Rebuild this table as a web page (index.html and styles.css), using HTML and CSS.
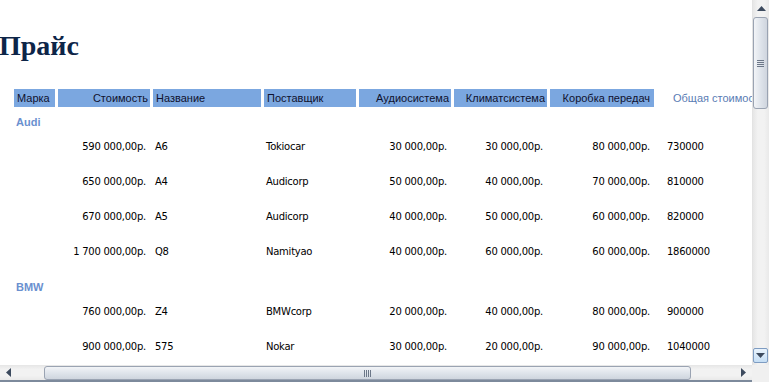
FILE: index.html
```html
<!DOCTYPE html>
<html lang="ru">
<head>
<meta charset="utf-8">
<title>Прайс</title>
<link rel="stylesheet" href="styles.css">
</head>
<body>
<div class="window">
  <div class="content">
    <h1 class="title">Прайс</h1>
    <div class="row head">
      <div class="hc l">Марка</div>
      <div class="hc r">Стоимость</div>
      <div class="hc l">Название</div>
      <div class="hc l">Поставщик</div>
      <div class="hc r">Аудиосистема</div>
      <div class="hc r">Климатсистема</div>
      <div class="hc r hc-last">Коробка передач</div>
      <div class="hc-total">Общая стоимость</div>
    </div>

    <div class="group">
      <div class="glabel">Audi</div>
      <div class="row data"><div></div><div class="r">590 000,00р.</div><div class="l">A6</div><div class="l">Tokiocar</div><div class="r">30 000,00р.</div><div class="r">30 000,00р.</div><div class="r">80 000,00р.</div><div class="t">730000</div></div>
      <div class="row data"><div></div><div class="r">650 000,00р.</div><div class="l">A4</div><div class="l">Audicorp</div><div class="r">50 000,00р.</div><div class="r">40 000,00р.</div><div class="r">70 000,00р.</div><div class="t">810000</div></div>
      <div class="row data"><div></div><div class="r">670 000,00р.</div><div class="l">A5</div><div class="l">Audicorp</div><div class="r">40 000,00р.</div><div class="r">50 000,00р.</div><div class="r">60 000,00р.</div><div class="t">820000</div></div>
      <div class="row data"><div></div><div class="r">1 700 000,00р.</div><div class="l">Q8</div><div class="l">Namityao</div><div class="r">40 000,00р.</div><div class="r">60 000,00р.</div><div class="r">60 000,00р.</div><div class="t">1860000</div></div>
    </div>

    <div class="group">
      <div class="glabel">BMW</div>
      <div class="row data"><div></div><div class="r">760 000,00р.</div><div class="l">Z4</div><div class="l">BMWcorp</div><div class="r">20 000,00р.</div><div class="r">40 000,00р.</div><div class="r">80 000,00р.</div><div class="t">900000</div></div>
      <div class="row data"><div></div><div class="r">900 000,00р.</div><div class="l">575</div><div class="l">Nokar</div><div class="r">30 000,00р.</div><div class="r">20 000,00р.</div><div class="r">90 000,00р.</div><div class="t">1040000</div></div>
    </div>
  </div>

  <div class="vscroll">
    <div class="sbtn">
      <svg width="9" height="5" viewBox="0 0 9 5"><path d="M0 5 L4.5 0 L9 5 Z" fill="#3c4a5e"/></svg>
    </div>
    <div class="vthumb">
      <span class="grip-h"></span><span class="grip-h"></span><span class="grip-h"></span><span class="grip-h"></span>
    </div>
    <div class="vtrack"></div>
    <div class="sbtn sbtn-hot">
      <svg width="9" height="5" viewBox="0 0 9 5"><path d="M0 0 L9 0 L4.5 5 Z" fill="#3c4a5e"/></svg>
    </div>
  </div>

  <div class="hscroll">
    <div class="hbtn">
      <svg width="5" height="9" viewBox="0 0 5 9"><path d="M5 0 L5 9 L0 4.5 Z" fill="#3c4a5e"/></svg>
    </div>
    <div class="htrack-a"></div>
    <div class="hthumb">
      <span class="grip-v"></span><span class="grip-v"></span><span class="grip-v"></span><span class="grip-v"></span>
    </div>
    <div class="htrack-b"></div>
    <div class="hbtn">
      <svg width="5" height="9" viewBox="0 0 5 9"><path d="M0 0 L5 4.5 L0 9 Z" fill="#3c4a5e"/></svg>
    </div>
  </div>

  <div class="corner"></div>
</div>
</body>
</html>
```

FILE: styles.css
```css
html, body {
  margin: 0;
  padding: 0;
  background: #ffffff;
}

.window {
  display: grid;
  grid-template-columns: 752px 17px;
  grid-template-rows: 365px 17px;
  width: 769px;
  height: 382px;
  overflow: hidden;
}

.content {
  overflow: hidden;
  background: #ffffff;
}

.title {
  margin: 0;
  padding: 29px 0 0 0;
  height: 60px;
  line-height: 34px;
  font-family: "Liberation Serif", serif;
  font-weight: bold;
  font-size: 28px;
  color: #0d2548;
  text-indent: -1px;
}

.row {
  display: grid;
  grid-template-columns: 41px 92px 108px 92px 92px 93px 104px 120px;
  column-gap: 3px;
  padding-left: 14px;
}

.head {
  height: 18px;
  font-family: "Liberation Sans", sans-serif;
  font-size: 11px;
  line-height: 18px;
  color: #10122e;
  margin-bottom: 8px;
}

.hc {
  background: #7ba7e0;
  white-space: nowrap;
  overflow: hidden;
}

.hc.l { padding-left: 3px; }
.hc.r { text-align: right; padding-right: 2px; }
.hc.hc-last { padding-right: 4px; }

.hc-total {
  padding-left: 16px;
  color: #5a7cb4;
  white-space: nowrap;
}

.glabel {
  height: 25px;
  line-height: 14px;
  padding-left: 16px;
  font-family: "Liberation Sans", sans-serif;
  font-size: 11px;
  font-weight: bold;
  color: #6a90cf;
}

.data {
  height: 35px;
  line-height: 14px;
  font-family: "DejaVu Sans", sans-serif;
  font-size: 10px;
  letter-spacing: -0.25px;
  color: #000000;
  white-space: nowrap;
}

.data .r { text-align: right; padding-right: 4px; }
.data .l { padding-left: 2px; }
.data .t { padding-left: 10px; }

/* vertical scrollbar */
.vscroll {
  display: flex;
  flex-direction: column;
  background: linear-gradient(to right, #e6e6e6, #f2f2f2 30%, #f2f2f2 70%, #e9e9e9);
  border-left: 1px solid #e3e3e3;
  box-sizing: border-box;
}

.sbtn {
  height: 17px;
  flex: none;
  display: flex;
  align-items: center;
  justify-content: center;
}

.sbtn-hot {
  margin: 0 1px 2px 0;
  height: 15px;
  background: linear-gradient(to bottom, #e9f3fc, #c5def5);
  border: 1px solid #7e9cc2;
  border-radius: 2px;
  box-sizing: border-box;
}

.vthumb {
  height: 92px;
  flex: none;
  margin-right: 1px;
  box-sizing: border-box;
  border: 1px solid #9aa3b2;
  border-radius: 3px;
  background: linear-gradient(to right, #f2f4f7, #dfe4eb 50%, #cfd5de);
  display: flex;
  flex-direction: column;
  align-items: center;
  justify-content: center;
  gap: 1px;
}

.grip-h {
  width: 7px;
  height: 1px;
  background: #6c7788;
}

.vtrack { flex: 1; }

/* horizontal scrollbar */
.hscroll {
  display: flex;
  align-items: stretch;
  background: linear-gradient(to bottom, #e6e6e6, #f2f2f2 30%, #f2f2f2 70%, #e9e9e9);
  border-bottom: 2px solid #7d8a9c;
  box-sizing: border-box;
}

.hbtn {
  width: 17px;
  flex: none;
  display: flex;
  align-items: center;
  justify-content: center;
}

.htrack-a { width: 27px; flex: none; }

.hthumb {
  width: 647px;
  flex: none;
  margin: 1px 0 0 0;
  box-sizing: border-box;
  border: 1px solid #9aa3b2;
  border-radius: 3px;
  background: linear-gradient(to bottom, #f2f4f7, #dfe4eb 50%, #cfd5de);
  display: flex;
  align-items: center;
  justify-content: center;
  gap: 1px;
}

.grip-v {
  width: 1px;
  height: 7px;
  background: #6c7788;
}

.htrack-b { flex: 1; }

.corner {
  background: #f0f0f0;
}
```
